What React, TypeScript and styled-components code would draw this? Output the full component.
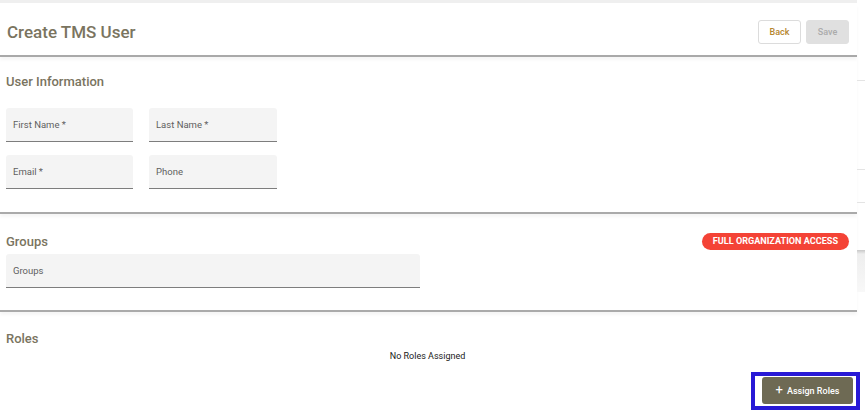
import styled, { createGlobalStyle } from 'styled-components'

const GlobalStyle = createGlobalStyle`
  body {
    margin: 0;
    font-family: Roboto, "Liberation Sans", sans-serif;
    background: #ffffff;
  }
`

const Page = styled.div`
  display: flex;
  width: 865px;
  height: 416px;
  overflow: hidden;
  background: #fff;
`

const Main = styled.div`
  width: 857px;
  flex-shrink: 0;
  display: flex;
  flex-direction: column;
  border-top: 3px solid #efefef;
`

const SideStrip = styled.div`
  flex: 1;
  display: flex;
  flex-direction: column;
  padding-top: 77px;
`

const SideLine = styled.div<{ $gap: number }>`
  margin-top: ${p => p.$gap}px;
  border-top: 1px solid #e4e4e4;
`

const SideBlock = styled.div`
  margin-top: 47px;
  height: 42px;
  background: linear-gradient(#c8c8c8 0, #eeeeee 4px, #f8f8f8 100%);
`

const Header = styled.header`
  display: flex;
  align-items: center;
  justify-content: space-between;
  height: 53px;
  padding: 5px 8px 0 7px;
  box-sizing: border-box;
  border-bottom: 2px solid #a9a9a9;
  box-shadow: 0 3px 3px rgba(0, 0, 0, 0.04);
  margin-top: 1px;
`

const Title = styled.h1`
  margin: 0;
  font-size: 17px;
  font-weight: 500;
  color: #7a7460;
`

const Actions = styled.div`
  display: flex;
  gap: 5px;
`

const HeaderButton = styled.button<{ $disabled?: boolean }>`
  width: 43px;
  height: 24px;
  border-radius: 3px;
  font-family: inherit;
  font-size: 9px;
  font-weight: 500;
  cursor: pointer;
  border: 1px solid ${p => (p.$disabled ? '#e0e0e0' : '#dcdcdc')};
  background: ${p => (p.$disabled ? '#e0e0e0' : '#fff')};
  color: ${p => (p.$disabled ? '#ababab' : '#b5862e')};
`

const Section = styled.section<{ $top: number; $bottom: number; $divider?: boolean }>`
  padding: ${p => p.$top}px 8px ${p => p.$bottom}px 6px;
  border-bottom: ${p => (p.$divider ? '2px solid #aaaaaa' : 'none')};
  box-shadow: ${p => (p.$divider ? '0 3px 3px rgba(0, 0, 0, 0.04)' : 'none')};
`

const SectionHead = styled.div`
  display: flex;
  align-items: center;
  justify-content: space-between;
  height: 16px;
`

const SectionTitle = styled.h2`
  margin: 0;
  font-size: 13px;
  font-weight: 500;
  color: #7a7460;
`

const Badge = styled.span`
  height: 17px;
  padding: 0 11px;
  border-radius: 9px;
  background: #f44336;
  color: #fff;
  font-size: 9.1px;
  font-weight: 700;
  display: flex;
  align-items: center;
`

const FieldGrid = styled.div`
  display: grid;
  grid-template-columns: 127px 128px;
  column-gap: 16px;
  row-gap: 13px;
  margin-top: 19px;
`

const Field = styled.div<{ $width?: number }>`
  width: ${p => (p.$width ? `${p.$width}px` : 'auto')};
  height: 34px;
  display: flex;
  align-items: center;
  padding-left: 7px;
  box-sizing: border-box;
  background: #f4f4f4;
  border-radius: 3px 3px 0 0;
  border-bottom: 1px solid #7d7d7d;
  font-size: 9.5px;
  color: #5f5f5f;
`

const GroupsField = styled(Field)`
  margin-top: 5px;
`

const EmptyNote = styled.p`
  margin: 5px 0 0;
  text-align: center;
  font-size: 9px;
  color: #1a1a1a;
`

const Footer = styled.div`
  display: flex;
  justify-content: flex-end;
  margin-top: 11px;
  margin-right: -11px;
`

const FocusRing = styled.div`
  border: 4px solid #2819d6;
  padding: 1px 3px 2px 7px;
  background: #fff;
`

const AssignButton = styled.button`
  width: 91px;
  height: 27px;
  border: none;
  border-radius: 3px;
  background: #6e6a54;
  color: #fff;
  font-family: inherit;
  font-size: 9px;
  font-weight: 500;
  display: flex;
  align-items: center;
  justify-content: center;
  gap: 4px;
  cursor: pointer;

  span {
    font-size: 13px;
    font-weight: 400;
    line-height: 1;
    margin-top: -3px;
  }
`

export default function App() {
  return (
    <>
      <GlobalStyle />
      <Page>
        <Main>
          <Header>
            <Title>Create TMS User</Title>
            <Actions>
              <HeaderButton>Back</HeaderButton>
              <HeaderButton $disabled>Save</HeaderButton>
            </Actions>
          </Header>

          <Section $top={16} $bottom={23} $divider>
            <SectionHead>
              <SectionTitle>User Information</SectionTitle>
            </SectionHead>
            <FieldGrid>
              <Field>First Name *</Field>
              <Field>Last Name *</Field>
              <Field>Email *</Field>
              <Field>Phone</Field>
            </FieldGrid>
          </Section>

          <Section $top={19} $bottom={22} $divider>
            <SectionHead>
              <SectionTitle>Groups</SectionTitle>
              <Badge>FULL ORGANIZATION ACCESS</Badge>
            </SectionHead>
            <GroupsField $width={414}>Groups</GroupsField>
          </Section>

          <Section $top={18} $bottom={0}>
            <SectionHead>
              <SectionTitle>Roles</SectionTitle>
            </SectionHead>
            <EmptyNote>No Roles Assigned</EmptyNote>
            <Footer>
              <FocusRing>
                <AssignButton>
                  <span>+</span> Assign Roles
                </AssignButton>
              </FocusRing>
            </Footer>
          </Section>
        </Main>
        <SideStrip>
          <SideLine $gap={3} />
          <SideLine $gap={88} />
          <SideLine $gap={32} />
          <SideBlock />
        </SideStrip>
      </Page>
    </>
  )
}
